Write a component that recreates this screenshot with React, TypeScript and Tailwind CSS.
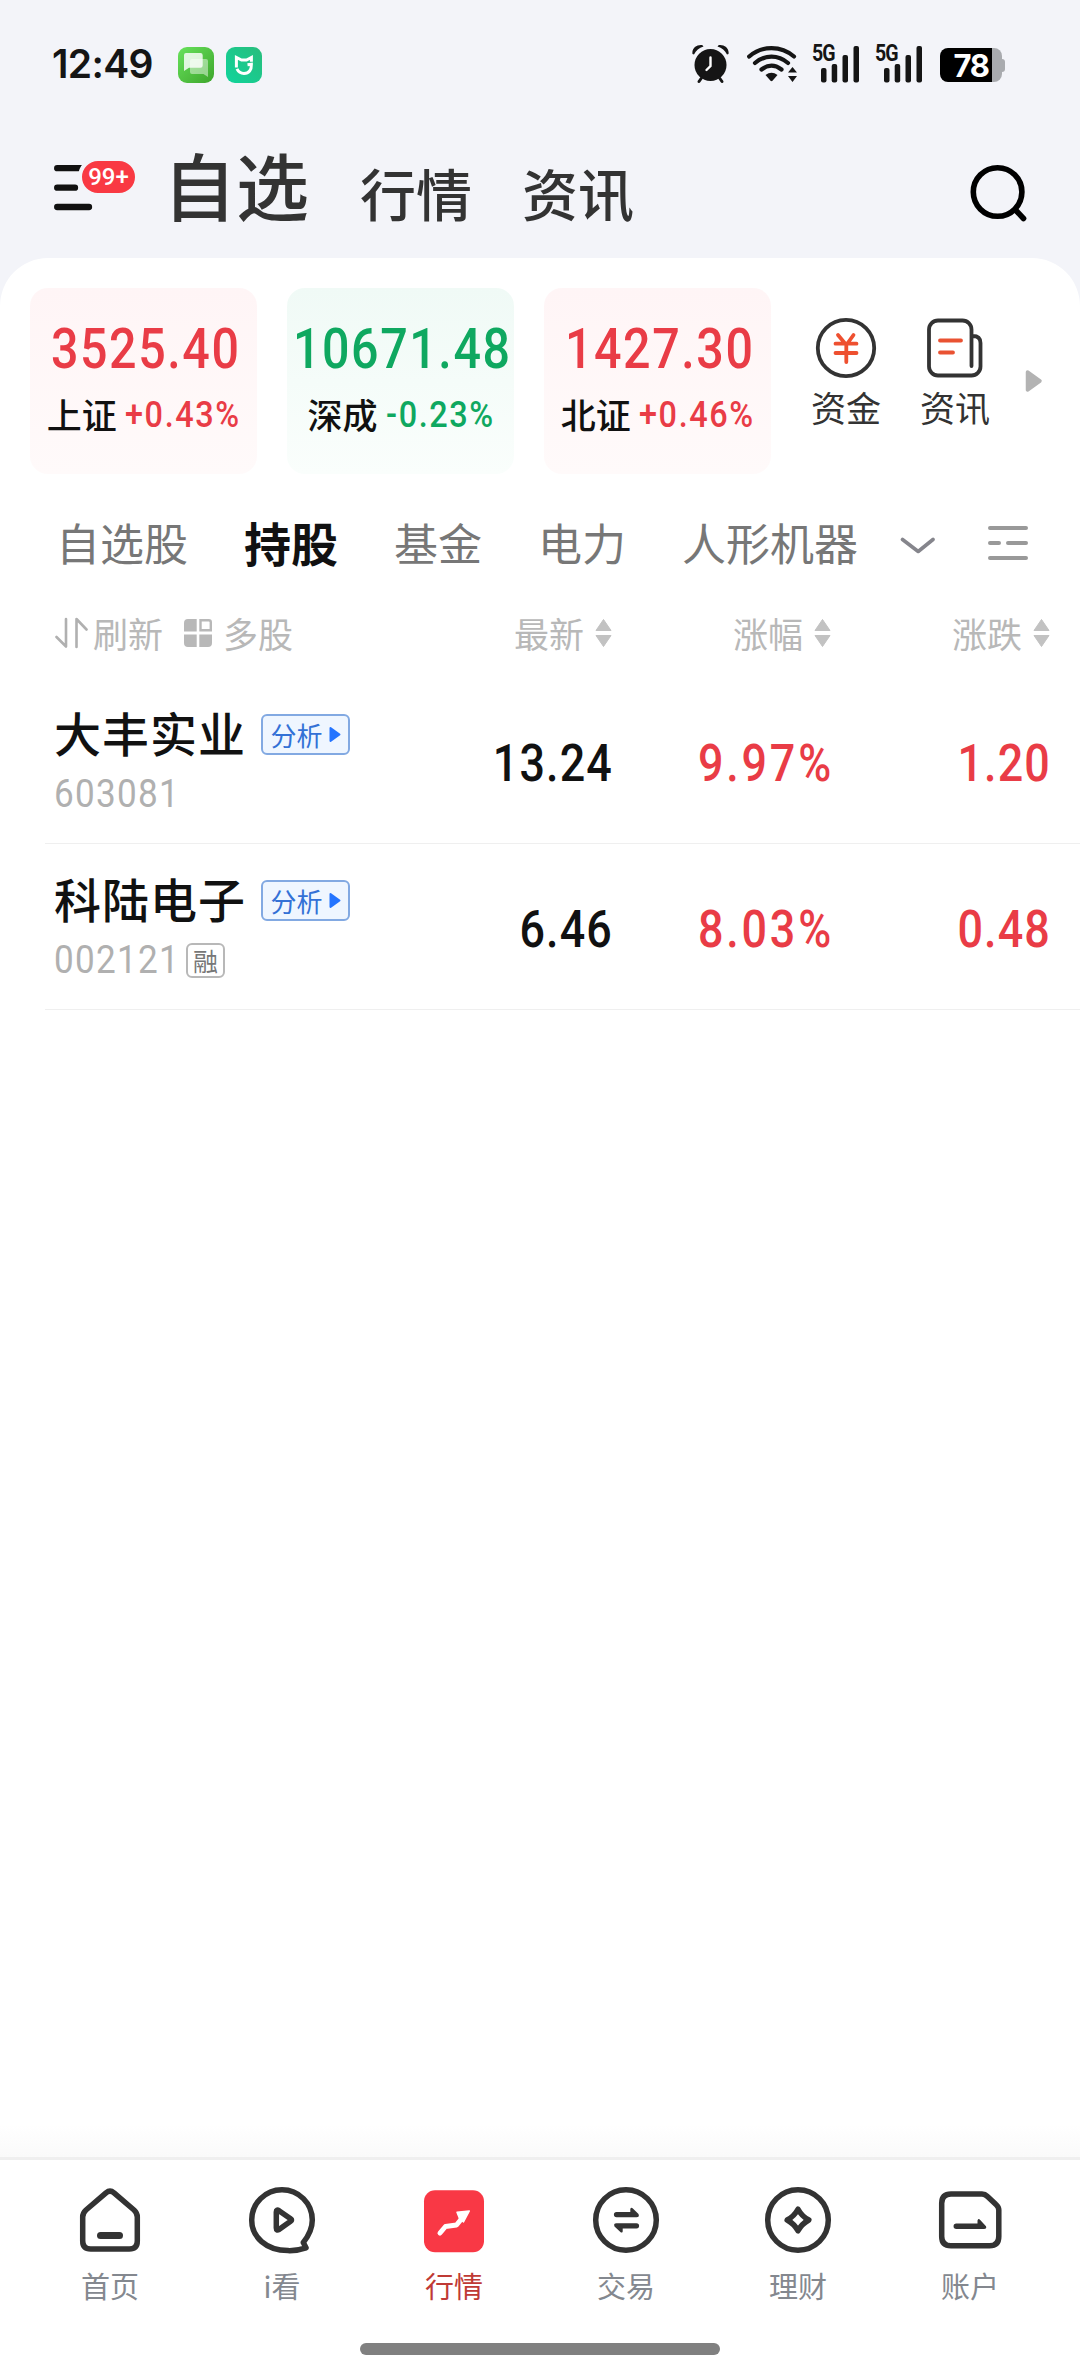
import type { ReactNode } from "react";

const CJK = "font-['Noto_Sans_CJK_SC','Noto_Sans_SC',sans-serif]";
const NUM = "font-['Roboto','Liberation_Sans',sans-serif]";

/* ---------- status bar ---------- */

function ChatAppIcon() {
  return (
    <svg width="36" height="36" viewBox="0 0 36 36">
      <defs>
        <linearGradient id="chatBg" x1="0" y1="0" x2="1" y2="1">
          <stop offset="0" stopColor="#68e25c" />
          <stop offset="1" stopColor="#3da52c" />
        </linearGradient>
      </defs>
      <rect width="36" height="36" rx="9" fill="url(#chatBg)" />
      <path d="M14 12H28a2 2 0 0 1 2 2V30L25.500 27H14a2 2 0 0 1-2-2V14a2 2 0 0 1 2-2Z" fill="#fff" fillOpacity=".45" />
      <path d="M8 6H22.500a2.200 2.200 0 0 1 2.200 2.200V18.500a2.200 2.200 0 0 1-2.200 2.200H11L6 24V8a2 2 0 0 1 2-2Z" fill="#fff" fillOpacity=".82" />
    </svg>
  );
}

function HomeAppIcon() {
  return (
    <svg width="36" height="36" viewBox="0 0 36 36">
      <defs>
        <linearGradient id="homeBg" x1="0" y1="1" x2="1" y2="0">
          <stop offset="0" stopColor="#10d49c" />
          <stop offset="1" stopColor="#28bd7c" />
        </linearGradient>
      </defs>
      <rect width="36" height="36" rx="9" fill="url(#homeBg)" />
      <g fill="none" stroke="#fff" strokeWidth="3">
        <path d="M10.400 20.600V10.500L15.500 13H20.500L25.400 10.500V14.800" />
        <path d="M11 21.800C12.600 25.200 15 26.400 18 26.400C23 26.400 25.600 23 25.400 17.300L21.500 17.800" />
      </g>
    </svg>
  );
}

function AlarmIcon() {
  return (
    <svg width="38" height="40" viewBox="0 0 38 40">
      <circle cx="18.500" cy="21" r="16" fill="#151515" />
      <path d="M18.500 13.500V22L14.500 26" fill="none" stroke="#fff" strokeWidth="2.400" strokeLinecap="round" />
      <path d="M.500 10C-.500 4 5 .300 10.500 1.200L11.500 2.500C7 4 4 6.500 2 10.500Z M36.500 10C37.500 4 32 .300 26.500 1.200L25.500 2.500C30 4 33 6.500 35 10.500Z" fill="#151515" />
      <path d="M9.500 34L7 37.500M27.500 34L30 37.500" stroke="#151515" strokeWidth="3" strokeLinecap="round" />
    </svg>
  );
}

function WifiIcon() {
  return (
    <svg width="52" height="38" viewBox="0 0 52 38">
      <g fill="none" stroke="#151515" strokeWidth="4.200" strokeLinecap="round">
        <path d="M2.200 11.500C15 .300 34 .300 47 11.500" />
        <path d="M8 18C18 9.500 31 9.500 41 18" />
        <path d="M14.500 24.500C21 19.500 28 19.500 34.500 24.500" />
      </g>
      <path d="M18.500 30Q24.500 25.500 30.500 30L25.500 35.800Q24.500 36.700 23.500 35.800Z" fill="#151515" />
      <path d="M45.500 22L50 27.500H41ZM45.500 37L50 31H41Z" fill="#151515" />
    </svg>
  );
}

function Signal5G() {
  return (
    <div className="flex w-[48px] h-[38px]">
      <span className={`${NUM} w-[9px] whitespace-nowrap font-bold text-[23px] leading-[18px] tracking-[-1px] text-[#151515] origin-left scale-x-85`}>
        5G
      </span>
      <svg width="39" height="38" viewBox="0 0 39 38" fill="#151515">
        <rect x="0" y="23" width="5.500" height="14.500" rx="2" />
        <rect x="10.700" y="19" width="5.500" height="18.500" rx="2" />
        <rect x="21.500" y="10" width="5.500" height="27.500" rx="2" />
        <rect x="32.500" y="1" width="5.500" height="36.500" rx="2" />
      </svg>
    </div>
  );
}

function StatusBar() {
  return (
    <div className="flex h-[126px] items-center pl-[52px] pr-[75px]">
      <span className="w-[126px] whitespace-nowrap font-['Inter',sans-serif] text-[39px] font-semibold leading-none tracking-[-0.7px] text-[#151515]">
        12:49
      </span>
      <div className="flex gap-3 pt-1">
        <ChatAppIcon />
        <HomeAppIcon />
      </div>
      <div className="ml-auto flex items-center">
        <div className="mr-[17px] pt-0.5"><AlarmIcon /></div>
        <div className="mr-[13px] pt-0.5"><WifiIcon /></div>
        <div className="mr-[15px] pt-0.5"><Signal5G /></div>
        <div className="mr-[17px] pt-0.5"><Signal5G /></div>
        <div className="flex items-center pt-1">
          <div className="flex h-[34px] w-[62px] items-center justify-center rounded-[8px] bg-[linear-gradient(to_right,#000_52px,#a9abaf_52px)]">
            <span className="font-['Inter',sans-serif] text-[31px] font-bold leading-none tracking-[-1.5px] text-white">78</span>
          </div>
          <div className="h-[13px] w-[3px] rounded-r-[3px] bg-[#a9abaf]" />
        </div>
      </div>
    </div>
  );
}

/* ---------- header ---------- */

function Header() {
  return (
    <div className="flex h-[132px] pl-[54px] pr-[51px]">
      <div className="relative mt-[39px] h-[46px] w-[82px]">
        <svg width="40" height="46" viewBox="0 0 40 46" fill="none" stroke="#111" strokeWidth="6.300" strokeLinecap="round">
          <path d="M3.200 3.200H35M3.200 22.700H21M3.200 42H35" />
        </svg>
        <div className={`${NUM} absolute left-[24px] top-[-8px] flex h-[40px] w-[61px] items-center justify-center rounded-full border-4 border-[#f3f4f9] bg-[#f93943] text-[24px] font-medium leading-none text-white`}>
          99+
        </div>
      </div>
      <nav className={`${CJK} flex whitespace-nowrap font-medium text-[#333]`}>
        <span className="ml-[27px] mt-[7px] text-[73px] leading-[100px]">自选</span>
        <span className="ml-[51px] mt-[16px] text-[56px] leading-[100px]">行情</span>
        <span className="ml-[50px] mt-[16px] text-[56px] leading-[100px]">资讯</span>
      </nav>
      <svg className="ml-auto mt-[38px]" width="59" height="60" viewBox="0 0 59 60" fill="none" stroke="#000" strokeWidth="5.600" strokeLinecap="round">
        <circle cx="27.600" cy="28" r="24.300" />
        <path d="M46 46.500L53.500 54.500" />
      </svg>
    </div>
  );
}

/* ---------- index cards ---------- */

const indices = [
  { value: "3525.40", name: "上证", change: "+0.43%", up: true },
  { value: "10671.48", name: "深成", change: "-0.23%", up: false },
  { value: "1427.30", name: "北证", change: "+0.46%", up: true },
];

function IndexCard({ value, name, change, up }: (typeof indices)[number]) {
  const tone = up
    ? "text-[#e93c46] bg-linear-to-b from-[#fff5f6] to-[#fffafa]"
    : "text-[#0fa860] bg-linear-to-b from-[#f0faf6] to-[#fafefc]";
  return (
    <div className={`flex h-[186px] w-[227px] flex-col items-center rounded-[18px] ${tone}`}>
      <div className={`${NUM} ml-[4px] mt-[31px] scale-x-88 whitespace-nowrap text-[55px] font-medium leading-[60px] tracking-[1.800px]`}>{value}</div>
      <div className="mt-[12px] flex items-center gap-[8px] whitespace-nowrap">
        <span className={`${CJK} text-[35px] font-medium leading-[46px] text-[#111]`}>{name}</span>
        <span className={`${NUM} mr-[-13px] origin-left scale-x-90 pt-[2px] text-[36px] font-medium leading-[44px] tracking-[1.800px]`}>{change}</span>
      </div>
    </div>
  );
}

function FundIcon() {
  return (
    <svg width="62" height="62" viewBox="0 0 62 62" fill="none" strokeLinecap="round">
      <circle cx="31" cy="31" r="28.200" stroke="#333" strokeWidth="3.800" />
      <path d="M23 18L31.300 28L38.500 18M20.500 26.700H41.500M20.500 36H41.500M31.300 28V45" stroke="#ee5030" strokeWidth="3.800" />
    </svg>
  );
}

function NewsIcon() {
  return (
    <svg width="62" height="62" viewBox="0 0 62 62" fill="none" strokeLinecap="round" strokeLinejoin="round">
      <path d="M47.500 49V12.500a9 9 0 0 0-9-9H14a9 9 0 0 0-9 9V49.500a9 9 0 0 0 9 9H47.500a9 9 0 0 0 9-9V26Q56.500 19 49 19" stroke="#333" strokeWidth="3.800" />
      <path d="M16 23.500H37M16 35.500H29" stroke="#e95232" strokeWidth="3.800" />
    </svg>
  );
}

function Shortcut({ icon, label }: { icon: ReactNode; label: string }) {
  return (
    <div className="flex w-[70px] flex-col items-center pt-[29px]">
      {icon}
      <span className={`${CJK} mt-[5px] whitespace-nowrap text-[35px] leading-[46px] text-[#333]`}>{label}</span>
    </div>
  );
}

function IndexStrip() {
  return (
    <div className="flex gap-[30px] pl-[30px] pt-[30px]">
      {indices.map((i) => (
        <IndexCard key={i.name} {...i} />
      ))}
      <div className="ml-[10px] flex gap-[39px]">
        <Shortcut icon={<FundIcon />} label="资金" />
        <Shortcut icon={<NewsIcon />} label="资讯" />
      </div>
      <svg className="ml-[5px] mt-[81px]" width="18" height="24" viewBox="0 0 18 24">
        <path d="M2.500 3L15 12L2.500 21Z" fill="#b3b3b3" stroke="#b3b3b3" strokeWidth="3.500" strokeLinejoin="round" />
      </svg>
    </div>
  );
}

/* ---------- group tabs & column header ---------- */

function GroupTabs() {
  return (
    <div className={`${CJK} flex h-[86px] items-center whitespace-nowrap pl-[56px] text-[44px] leading-[60px] text-[#777]`}>
      <div className="flex items-center gap-[56px]">
        <span>自选股</span>
        <span className="text-[47px] font-bold text-[#111]">持股</span>
        <span>基金</span>
        <span>电力</span>
        <span>人形机器</span>
      </div>
      <svg className="ml-[42px] mt-[7px]" width="36" height="20" viewBox="0 0 36 20" fill="none" stroke="#85858c" strokeWidth="3.600" strokeLinecap="round" strokeLinejoin="round">
        <path d="M2.500 3.500L18.200 15.500L33 3.500" />
      </svg>
      <svg className="ml-[51px] mt-px" width="42" height="38" viewBox="0 0 42 38" fill="none" stroke="#999" strokeWidth="4" strokeLinecap="round">
        <path d="M3 4H39M3 19H12M21 19H39M3 34H39" />
      </svg>
    </div>
  );
}

function SortMark() {
  return (
    <svg className="ml-[11px]" width="17" height="30" viewBox="0 0 17 30" fill="#c2c2c2" stroke="#c2c2c2" strokeWidth="1" strokeLinejoin="round">
      <path d="M8.500 1.500L16 12.500H1ZM8.500 28.500L16 17.500H1Z" />
    </svg>
  );
}

function ColumnHeader() {
  return (
    <div className={`${CJK} flex h-[90px] items-center whitespace-nowrap pl-[55px] pr-[30px] text-[35px] leading-[46px] text-[#b8b8b8]`}>
      <svg width="34" height="32" viewBox="0 0 34 32" fill="none" stroke="#b0b0b0" strokeWidth="2.600" strokeLinecap="round" strokeLinejoin="round">
        <path d="M1.500 20L11 29.500V2M21.500 30V2L31.500 12.500" />
      </svg>
      <span className="ml-[4px]">刷新</span>
      <svg className="ml-[21px]" width="28" height="28" viewBox="0 0 28 28" fill="#b8b8b8">
        <path d="M4 0H12.700V12.500H0V4a4 4 0 0 1 4-4ZM0 15.500H12.700V28H4a4 4 0 0 1-4-4ZM15.300 15.500H28V24a4 4 0 0 1-4 4H15.300Z" />
        <path d="M16.500 1.200H24.800a2 2 0 0 1 2 2V11.300H16.500Z" fill="none" stroke="#b8b8b8" strokeWidth="2.400" />
      </svg>
      <span className="ml-[11px]">多股</span>
      <div className="ml-auto grid grid-cols-[219px_219px_219px]">
        {["最新", "涨幅", "涨跌"].map((label) => (
          <div key={label} className="flex items-center justify-end">
            <span>{label}</span>
            <SortMark />
          </div>
        ))}
      </div>
    </div>
  );
}

/* ---------- holdings ---------- */

const stocks = [
  { name: "大丰实业", code: "603081", margin: false, price: "13.24", pct: "9.97%", diff: "1.20" },
  { name: "科陆电子", code: "002121", margin: true, price: "6.46", pct: "8.03%", diff: "0.48" },
];

function StockRow({ name, code, margin, price, pct, diff }: (typeof stocks)[number]) {
  return (
    <div className="ml-[45px] flex h-[166px] border-b border-[#efefef] pl-[9px] pr-[29px]">
      <div className="pt-[23px]">
        <div className="flex h-[64px] items-center">
          <span className={`${CJK} mt-[-2px] whitespace-nowrap text-[47px] font-medium leading-[64px] tracking-[1px] text-[#111]`}>{name}</span>
          <div className="ml-[15px] mt-[3px] flex h-[41px] w-[89px] items-center justify-center gap-[6px] rounded-[6px] border-2 border-[#82a9e2] bg-[#eff6ff]">
            <span className={`${CJK} text-[26px] leading-[34px] text-[#3371d6]`}>分析</span>
            <svg width="12" height="17" viewBox="0 0 12 17">
              <path d="M1.500 2L10.500 8.500L1.500 15Z" fill="#2474ff" stroke="#2474ff" strokeWidth="2" strokeLinejoin="round" />
            </svg>
          </div>
        </div>
        <div className="mt-[5px] flex h-[48px] items-center">
          <span className={`${NUM} mr-[-14px] origin-left scale-x-90 text-[39px] leading-[48px] tracking-[1.400px] text-[#b0b0b0]`}>{code}</span>
          {margin && (
            <span className={`${CJK} ml-[6px] flex h-[35px] w-[39px] items-center justify-center rounded-[6px] border-2 border-[#b8b8b8] text-[25px] leading-none text-[#777]`}>
              融
            </span>
          )}
        </div>
      </div>
      <div className={`${NUM} ml-auto grid grid-cols-[219px_219px_219px] items-center pt-[6px] text-right text-[51px] font-medium leading-[60px] tracking-[1.300px] text-[#e93c46]`}>
        <span className="origin-right scale-x-88 text-[#111]">{price}</span>
        <span className="-mr-0.5 origin-right scale-x-88 tracking-[3.200px]">{pct}</span>
        <span className="origin-right scale-x-88">{diff}</span>
      </div>
    </div>
  );
}

/* ---------- bottom navigation ---------- */

function NavIcon({ children }: { children: ReactNode }) {
  return (
    <svg width="72" height="72" viewBox="0 0 72 72" fill="none" stroke="#333" strokeWidth="5.500" strokeLinecap="round" strokeLinejoin="round">
      {children}
    </svg>
  );
}

const halfArrow = "M26.500 28H40.300V25Q41 23 42.600 24.300L48.500 30Q49.800 33.200 46.500 33.200H26.500A2.600 2.600 0 0 1 26.500 28Z";

const navItems: { label: string; active?: boolean; icon: ReactNode }[] = [
  {
    label: "首页",
    icon: (
      <>
        <path d="M32 8.800Q36 5.600 40 8.800L60 26Q63.300 29 63.300 33V57Q63.300 65 55.300 65H16.700Q8.700 65 8.700 57V33Q8.700 29 12 26Z" />
        <path d="M26.500 51.500H45.500" strokeWidth="7" />
      </>
    ),
  },
  {
    label: "i看",
    icon: (
      <>
        <path d="M57.300 58.500L60 63.800Q51 66.900 42 66.600C20 66.400 5.700 53 5.700 36A30.300 30.300 0 1 1 66.300 36C66.300 44.500 62.500 52 57.300 58.500Z" />
        <path d="M30.300 28Q30.300 25 33 26.700L44.600 34.700Q46.500 36 44.600 37.300L33 45.600Q30.300 47 30.300 44Z" />
      </>
    ),
  },
  {
    label: "行情",
    active: true,
    icon: (
      <>
        <rect x="6" y="6.300" width="60" height="62" rx="11" fill="#f93845" stroke="none" />
        <path d="M22 49L27.500 42.500L38.500 41L45 33" stroke="#fff" strokeWidth="5" />
        <path d="M39 28.200L51.300 27L45.500 38L41.500 34.500Z" fill="#fff" stroke="#fff" strokeWidth="1.500" />
      </>
    ),
  },
  {
    label: "交易",
    icon: (
      <>
        <circle cx="36" cy="36" r="30.300" />
        <g fill="#333" stroke="none">
          <path d={halfArrow} />
          <path d={halfArrow} transform="rotate(180 36.500 36.200)" />
        </g>
      </>
    ),
  },
  {
    label: "理财",
    icon: (
      <>
        <circle cx="36" cy="36" r="30.300" />
        <path d="M36 25.200Q39.800 32.200 46.800 36Q39.800 39.800 36 46.800Q32.200 39.800 25.200 36Q32.200 32.200 36 25.200Z" />
      </>
    ),
  },
  {
    label: "账户",
    icon: (
      <>
        <path d="M17 10H48Q51 10 53.500 12.500L62 20.500Q64.800 23 64.800 26V52.500Q64.800 61.800 55.500 61.800H17Q7.700 61.800 7.700 52.500V19.300Q7.700 10 17 10Z" />
        <path d="M22.300 39.500H43.500V36.500Q44.500 34 46 35.800L52 42.300Q53 45 50 45H22.300A2.700 2.700 0 0 1 22.300 39.500Z" fill="#333" stroke="none" />
      </>
    ),
  },
];

function BottomNav() {
  return (
    <div className="flex h-[219px] flex-col border-t-3 border-[#efefef] bg-white">
      <div className="grid grid-cols-[repeat(6,172px)] justify-center pt-[24px]">
        {navItems.map((item) => (
          <div key={item.label} className="flex flex-col items-center">
            <NavIcon>{item.icon}</NavIcon>
            <span className={`${CJK} mt-[9px] whitespace-nowrap text-[29px] leading-[40px] ${item.active ? "text-[#bf3a35]" : "text-[#84888f]"}`}>
              {item.label}
            </span>
          </div>
        ))}
      </div>
      <div className="mx-auto mt-auto mb-[21px] h-[12px] w-[360px] rounded-full bg-[#808080]" />
    </div>
  );
}

export default function App() {
  return (
    <div className="flex h-[2376px] w-[1080px] flex-col overflow-hidden bg-[#f3f4f9]">
      <StatusBar />
      <Header />
      <main className="flex flex-1 flex-col rounded-t-[48px] bg-white">
        <IndexStrip />
        <div className="mt-[25px]">
          <GroupTabs />
        </div>
        <div className="mt-[3px]">
          <ColumnHeader />
        </div>
        {stocks.map((s) => (
          <StockRow key={s.code} {...s} />
        ))}
        <div className="mt-auto h-[32px] bg-linear-to-b from-white to-[#fafafa]" />
      </main>
      <BottomNav />
    </div>
  );
}
